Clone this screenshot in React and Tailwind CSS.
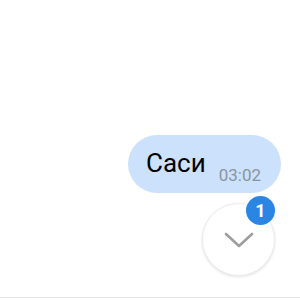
export default function App() {
  return (
    <div className="relative flex h-[300px] w-[300px] flex-col bg-white" style={{ fontFamily: "Roboto, sans-serif" }}>
      <div className="flex justify-end pr-[19px] pt-[135px]">
        <div className="flex h-[58px] items-start rounded-full bg-[#cce1fb] pl-[18px] pr-[20px]">
          <span className="mt-[13px] text-[26px] leading-[30px] text-black">Саси</span>
          <span className="ml-[13px] mt-[30px] text-[17px] leading-[20px] text-[#8a949e]">03:02</span>
        </div>
      </div>
      <div className="flex justify-end pr-[25px] pt-[10px]">
        <div className="relative flex h-[73px] w-[73px] items-center justify-center rounded-full border border-[#ececec] bg-white shadow-[0_1px_3px_rgba(0,0,0,0.12)]">
          <svg width="30" height="16" viewBox="0 0 30 16" fill="none">
            <path d="M2 2 L15 14 L28 2" stroke="#9e9e9e" strokeWidth="2.6" strokeLinecap="round" strokeLinejoin="round" />
          </svg>
          <div className="absolute right-[-1px] top-[-8px] flex h-[29px] w-[29px] items-center justify-center rounded-full bg-[#2b86e3] text-[18px] font-bold text-white">1</div>
        </div>
      </div>
      <div className="mt-auto mb-[2px] h-px w-full bg-[#e2e2e2]" />
    </div>
  );
}
